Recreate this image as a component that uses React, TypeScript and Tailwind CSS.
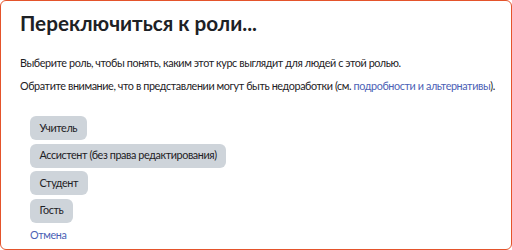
export default function App() {
  const roles = ["Учитель", "Ассистент (без права редактирования)", "Студент", "Гость"];
  return (
    <div className="w-[512px] h-[250px] bg-white font-['Lato','Open_Sans',sans-serif]">
      <div className="w-full h-full border border-[#e4532b] rounded-[6px] pl-[19px] pr-[6px] pt-[9px] text-[#1d2125]">
        <h2 className="text-[20.7px] font-bold leading-[26px] whitespace-nowrap">Переключиться к роли...</h2>
        <p className="text-[10.8px] leading-[17px] tracking-[-0.4px] mt-[18px] whitespace-nowrap">
          Выберите роль, чтобы понять, каким этот курс выглядит для людей с этой ролью.
        </p>
        <p className="text-[10.8px] leading-[17px] tracking-[-0.4px] mt-[5.5px] whitespace-nowrap">
          Обратите внимание, что в представлении могут быть недоработки (см.{" "}
          <a className="text-[#4b5fb5]">подробности и альтернативы</a>).
        </p>
        <div className="flex flex-col items-start gap-[3.5px] mt-[22.5px] pl-[10px]">
          {roles.map((r) => (
            <button
              key={r}
              className="bg-[#ced4da] rounded-[6px] h-[24px] px-[9.5px] text-[10.8px] tracking-[-0.4px] text-[#1d2125] whitespace-nowrap"
            >
              {r}
            </button>
          ))}
          <a className="text-[10.8px] tracking-[-0.4px] text-[#4b5fb5] leading-[17px]">Отмена</a>
        </div>
      </div>
    </div>
  );
}
